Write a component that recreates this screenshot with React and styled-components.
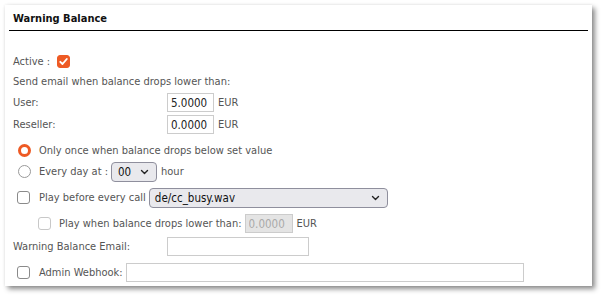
import React from 'react';
import styled, { createGlobalStyle } from 'styled-components';

const GlobalStyle = createGlobalStyle`
    html, body {
        margin: 0;
        padding: 0;
        background: #ffffff;
    }
    body {
        font-family: "DejaVu Sans Condensed", "DejaVu Sans", sans-serif;
        font-size: 11px;
        color: #555555;
    }
`;

const orange = '#ee5a24';

function Chevron() {
    return (
        <svg width="9" height="6" viewBox="0 0 9 6">
            <path d="M1.5 1.5 L4.5 4.5 L7.5 1.5" fill="none" stroke="#222" strokeWidth="1.4" strokeLinecap="round" strokeLinejoin="round" />
        </svg>
    );
}

function Check({ checked, disabled }) {
    return (
        <CheckBox $checked={checked} $disabled={disabled}>
            {checked &&
                <svg width="11" height="11" viewBox="0 0 11 11">
                    <path d="M2.3 5.8 L4.5 8 L8.8 3" fill="none" stroke="#fff" strokeWidth="1.9" strokeLinecap="round" strokeLinejoin="round" />
                </svg>
            }
        </CheckBox>
    );
}

function Select({ value, width, pad }) {
    return (
        <SelectBox $width={width} $pad={pad}>
            <SelectText>{value}</SelectText>
            <Chevron />
        </SelectBox>
    );
}

function App() {
    return (
        <>
            <GlobalStyle />
            <Page>
                <Panel>
                    <Header>Warning Balance</Header>
                    <Body>
                        <Row $mt={21} $h={19}>
                            <span>Active :</span>
                            <Gap $w={7} />
                            <Check checked />
                        </Row>
                        <Row $h={20}>
                            <span>Send email when balance drops lower than:</span>
                        </Row>
                        <Row $mt={1} $h={21}>
                            <Label>User:</Label>
                            <TextInput $width={47} value="5.0000" readOnly />
                            <Unit>EUR</Unit>
                        </Row>
                        <Row $mt={1} $h={21}>
                            <Label>Reseller:</Label>
                            <TextInput $width={47} value="0.0000" readOnly />
                            <Unit>EUR</Unit>
                        </Row>
                        <Row $mt={5} $h={20} $indent={5}>
                            <Radio $checked />
                            <Gap $w={8} />
                            <span>Only once when balance drops below set value</span>
                        </Row>
                        <Row $mt={1} $h={21} $indent={5}>
                            <Radio />
                            <Gap $w={8} />
                            <span>Every day at :</span>
                            <Gap $w={3} />
                            <Select value="00" width={46} pad={6} />
                            <Unit>hour</Unit>
                        </Row>
                        <Row $mt={5} $h={21} $indent={4}>
                            <Check />
                            <Gap $w={9} />
                            <span>Play before every call</span>
                            <Gap $w={3} />
                            <Select value="de/cc_busy.wav" width={239} pad={5} />
                        </Row>
                        <Row $mt={5} $h={21} $indent={25}>
                            <Check disabled />
                            <Gap $w={8} />
                            <span>Play when balance drops lower than:</span>
                            <Gap $w={3} />
                            <TextInput $width={48} $disabled value="0.0000" disabled />
                            <Unit>EUR</Unit>
                        </Row>
                        <Row $mt={3} $h={19}>
                            <Label>Warning Balance Email:</Label>
                            <TextInput $width={142} value="" readOnly />
                        </Row>
                        <Row $mt={6} $h={20} $indent={4}>
                            <Check />
                            <Gap $w={9} />
                            <span>Admin Webhook:</span>
                            <Gap $w={3} />
                            <TextInput $width={398} value="" readOnly />
                        </Row>
                    </Body>
                </Panel>
            </Page>
        </>
    );
}

const Page = styled.div`
    padding: 5px 0 0 5px;
    width: 604px;
    height: 298px;
    box-sizing: border-box;
`;

const Panel = styled.div`
    width: 587px;
    height: 281px;
    box-sizing: border-box;
    background: #ffffff;
    padding: 0 4px;
    box-shadow: 3px 3px 5px rgba(0, 0, 0, 0.45), 0 0 3px rgba(0, 0, 0, 0.08);
`;

const Header = styled.div`
    font-family: "DejaVu Sans Condensed", "DejaVu Sans", sans-serif;
    font-weight: bold;
    font-size: 11px;
    color: #111111;
    height: 25px;
    line-height: 28px;
    padding-left: 4px;
    border-bottom: 1px solid #000000;
`;

const Body = styled.div`
    display: flex;
    flex-direction: column;
    padding-left: 4px;
`;

const Row = styled.div`
    display: flex;
    flex-direction: row;
    align-items: center;
    height: ${(p) => p.$h}px;
    margin-top: ${(p) => p.$mt || 0}px;
    padding-left: ${(p) => p.$indent || 0}px;
    white-space: nowrap;
`;

const Label = styled.span`
    width: 154px;
    flex-shrink: 0;
`;

const Unit = styled.span`
    margin-left: 4px;
`;

const Gap = styled.span`
    display: inline-block;
    width: ${(p) => p.$w}px;
    flex-shrink: 0;
`;

const CheckBox = styled.span`
    display: inline-flex;
    align-items: center;
    justify-content: center;
    width: 13px;
    height: 13px;
    box-sizing: border-box;
    border-radius: 3px;
    flex-shrink: 0;
    background: ${(p) => (p.$checked ? orange : '#ffffff')};
    border: 1px solid ${(p) => (p.$checked ? orange : p.$disabled ? '#c8c8c8' : '#8a8a8a')};
`;

const Radio = styled.span`
    display: inline-block;
    width: 13px;
    height: 13px;
    box-sizing: border-box;
    border-radius: 50%;
    flex-shrink: 0;
    background: #ffffff;
    border: ${(p) => (p.$checked ? `3px solid ${orange}` : '1px solid #999999')};
`;

const TextInput = styled.input`
    width: ${(p) => p.$width}px;
    height: 19px;
    box-sizing: border-box;
    margin: 0;
    padding: 0 3px;
    font-family: "DejaVu Sans Condensed", "DejaVu Sans", sans-serif;
    font-size: 11.5px;
    color: ${(p) => (p.$disabled ? '#aaaaaa' : '#222222')};
    background: ${(p) => (p.$disabled ? '#e4e4e4' : '#ffffff')};
    border: 1px solid #cccccc;
    border-radius: 0;
    outline: none;
`;

const SelectBox = styled.div`
    display: flex;
    align-items: center;
    justify-content: space-between;
    width: ${(p) => p.$width}px;
    height: 20px;
    box-sizing: border-box;
    padding: 0 7px 0 ${(p) => p.$pad}px;
    background: #e9e9ed;
    border: 1px solid #8f8f9d;
    border-radius: 4px;
    flex-shrink: 0;
`;

const SelectText = styled.span`
    font-family: "DejaVu Sans Condensed", "DejaVu Sans", sans-serif;
    font-size: 11.5px;
    color: #111111;
`;

export default App;
